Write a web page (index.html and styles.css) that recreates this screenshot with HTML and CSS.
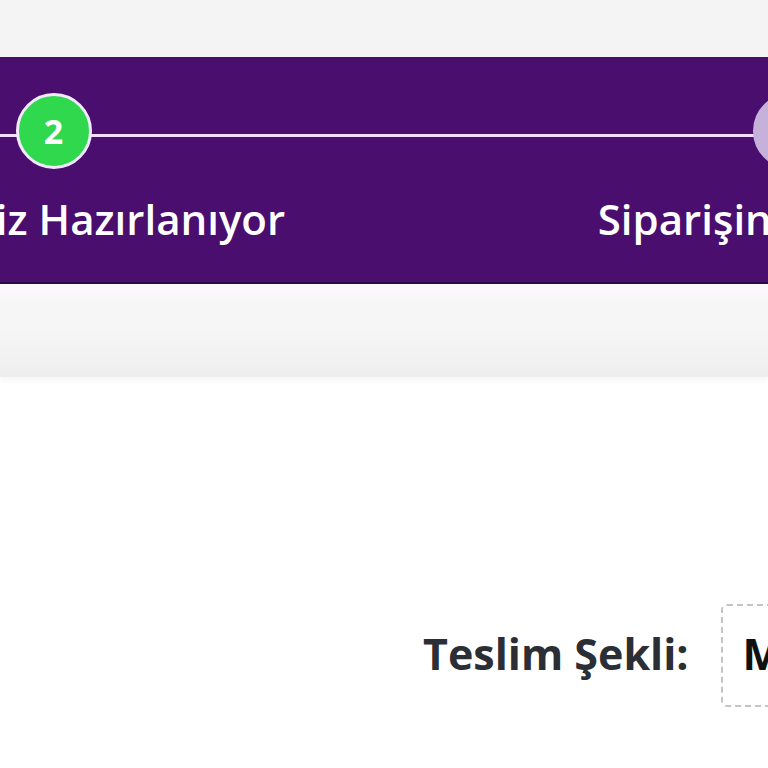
FILE: index.html
```html
<!DOCTYPE html>
<html lang="tr">
<head>
  <meta charset="UTF-8">
  <meta name="viewport" content="width=device-width, initial-scale=1.0">
  <title>Sipariş Takibi</title>
  <link rel="stylesheet" href="styles.css">
</head>
<body>

  <div class="top-strip"></div>

  <div class="order-steps">
    <div class="steps-track">
      <div class="step done">
        <span class="step-dot">1</span>
        <span class="step-label">Siparişiniz Alındı</span>
      </div>
      <div class="step active">
        <span class="step-dot">2</span>
        <span class="step-label">Siparişiniz Hazırlanıyor</span>
      </div>
      <div class="step">
        <span class="step-dot">3</span>
        <span class="step-label">Siparişiniz Kargoda</span>
      </div>
    </div>
  </div>

  <div class="steps-fade"></div>

  <div class="order-info">
    <div class="info-row">
      <span class="info-title">Teslim Şekli:</span>
      <span class="info-value">Mağazadan Teslim</span>
    </div>
  </div>

</body>
</html>
```

FILE: styles.css
```css
body {
  font-family: "Open Sans", Arial, sans-serif;
  margin: 0;
  padding: 0;
  background-color: #fff;
  overflow: hidden;
}
.top-strip {
  height: 57px;
  background-color: #f4f4f4;
}
.order-steps {
  height: 225px;
  background: linear-gradient(#f6dcff, #f6dcff) 0 77px / 100% 3px no-repeat, #4a0e6e;
  border-bottom: 2px solid #2c0742;
  overflow: hidden;
}
.steps-track {
  display: flex;
  margin-left: -1052px;
  padding-top: 36px;
}
.step {
  flex: 0 0 737px;
  display: flex;
  flex-direction: column;
  align-items: center;
}
.step-dot {
  width: 70px;
  height: 70px;
  border: 3px solid #fff;
  border-radius: 50%;
  background-color: #c6b1da;
  color: #fff;
  font-size: 34px;
  font-weight: 700;
  display: flex;
  align-items: center;
  justify-content: center;
}
.step.active .step-dot,
.step.done .step-dot {
  background-color: #2fd84c;
}
.step.active .step-dot {
  border-color: #f2e9ff;
}
.step:not(.active):not(.done) .step-dot {
  border-color: #c6b1da;
}
.step-label {
  margin-top: 21px;
  color: #fff;
  font-size: 42px;
  font-weight: 600;
  white-space: nowrap;
}
.steps-fade {
  height: 93px;
  background: linear-gradient(#fdf9ff 0, #f6f6f6 18px, #f6f6f6 50%, #eeeeee 100%);
  box-shadow: 0 4px 6px rgba(0, 0, 0, 0.04);
}
.order-info {
  padding-top: 227px;
}
.info-row {
  display: flex;
  align-items: center;
  margin-left: 423px;
  gap: 32px;
}
.info-title {
  font-size: 43px;
  font-weight: 700;
  color: #2b2e35;
  white-space: nowrap;
  margin-bottom: 5px;
}
.info-value {
  border: 2px dashed #c4c4c4;
  border-radius: 6px;
  padding: 18px 20px 22px;
  font-size: 43px;
  font-weight: 700;
  color: #111;
  white-space: nowrap;
}
```
